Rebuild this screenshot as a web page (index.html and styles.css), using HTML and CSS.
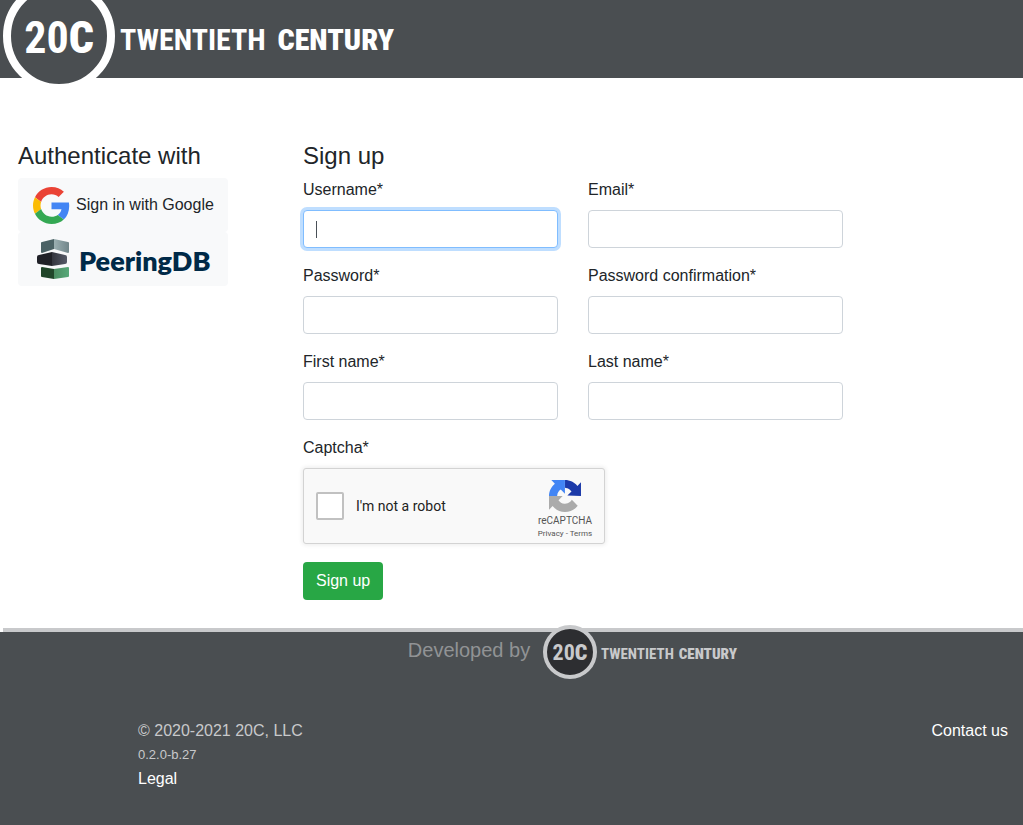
FILE: index.html
```
<!DOCTYPE html>
<html lang="en">
<head>
<meta charset="utf-8">
<title>Sign up - Twentieth Century</title>
<link rel="stylesheet" href="styles.css">
</head>
<body>
<header class="site-header">
  <a class="brand" href="#" aria-label="20C Twentieth Century">
    <svg class="brand-logo" width="400" height="92" viewBox="0 0 400 92">
      <circle cx="59" cy="36" r="52" class="brand-ring"/>
      <text x="59" y="53" class="mark" text-anchor="middle">20<tspan class="heavy">C</tspan></text>
      <text x="120" y="50" class="word">TWENTIETH</text>
      <text x="394" y="50" class="word heavy" text-anchor="end">CENTURY</text>
    </svg>
  </a>
</header>

<main class="page">
  <section class="auth">
    <h4 class="title">Authenticate with</h4>
    <button type="button" class="auth-button">
      <svg class="google-icon" width="37" height="37" viewBox="0 0 48 48" aria-hidden="true">
        <path fill="#EA4335" d="M24 9.500c3.540 0 6.710 1.220 9.210 3.600l6.850-6.850C35.900 2.380 30.470 0 24 0 14.620 0 6.510 5.380 2.560 13.220l7.980 6.190C12.430 13.720 17.740 9.500 24 9.500z"/>
        <path fill="#4285F4" d="M46.980 24.550c0-1.570-.15-3.090-.38-4.550H24v9.020h12.940c-.58 2.960-2.260 5.480-4.780 7.180l7.730 6c4.510-4.180 7.090-10.360 7.090-17.650z"/>
        <path fill="#FBBC05" d="M10.530 28.590c-.48-1.450-.76-2.990-.76-4.590s.27-3.140.76-4.590l-7.980-6.190C.92 16.460 0 20.120 0 24c0 3.880.92 7.540 2.560 10.780l7.970-6.190z"/>
        <path fill="#34A853" d="M24 48c6.480 0 11.930-2.130 15.890-5.810l-7.730-6c-2.150 1.450-4.920 2.300-8.160 2.300-6.260 0-11.570-4.220-13.470-9.910l-7.980 6.190C6.510 42.620 14.620 48 24 48z"/>
      </svg>
      <span>Sign in with Google</span>
    </button>
    <button type="button" class="auth-button peering">
      <svg width="34" height="42" viewBox="0 0 34 42" aria-hidden="true">
        <defs>
          <linearGradient id="top" x2="1"><stop stop-color="#9bafb1"/><stop offset="1" stop-color="#71868a"/></linearGradient>
          <linearGradient id="mid" x2="1"><stop stop-color="#34363e"/><stop offset="1" stop-color="#555a67"/></linearGradient>
          <linearGradient id="low" x2="1"><stop stop-color="#4a8c61"/><stop offset="1" stop-color="#56a878"/></linearGradient>
        </defs>
        <path fill="#4b6265" d="M5 5Q5 4 6 4L18 1v10L6 15Q5 15 5 14z"/>
        <path fill="url(#top)" d="M18 1l14 3q1 0 1 1v9q0 1-1 1l-14-4z"/>
        <path fill="#202127" d="M1 19q0-2 2-2l13-3v14L3 26q-2 0-2-2z"/>
        <path fill="url(#mid)" d="M16 14l13 3q2 0 2 2v5q0 2-2 2l-13 2z"/>
        <path fill="#204529" d="M5 30q0-1 1-1l12 2v10L6 39q-1 0-1-1z"/>
        <path fill="url(#low)" d="M18 31l14-2q1 0 1 1v8q0 1-1 1l-14 2z"/>
      </svg>
      <span class="peering-name">PeeringDB</span>
    </button>
  </section>

  <form class="signup">
    <h4 class="title">Sign up</h4>
    <div class="fields">
      <div class="field"><label for="username">Username*</label><input class="control focused" id="username" type="text"></div>
      <div class="field"><label for="email">Email*</label><input class="control" id="email" type="email"></div>
      <div class="field"><label for="password">Password*</label><input class="control" id="password" type="password"></div>
      <div class="field"><label for="confirm">Password confirmation*</label><input class="control" id="confirm" type="password"></div>
      <div class="field"><label for="first">First name*</label><input class="control" id="first" type="text"></div>
      <div class="field"><label for="last">Last name*</label><input class="control" id="last" type="text"></div>
    </div>
    <p class="captcha-label">Captcha*</p>
    <div class="captcha">
      <input class="robot-check" type="checkbox" id="robot">
      <label class="robot-label" for="robot">I'm not a robot</label>
      <div class="captcha-brand">
        <svg width="32" height="32" viewBox="0 0 64 64" aria-hidden="true">
          <path fill="#1c3aa9" d="M64 31.955l-.033-1.370V4.687l-7.160 7.160C50.948 4.674 42.033.093 32.050.093v15.500c.485 0 .860.057 1.135.163 4.976.393 9.288 3.140 11.828 7.124l-8.307 8.307L64 31.953"/>
          <path fill="#4285f4" d="M31.862.094l-1.370.033H4.594l7.160 7.160C4.580 13.147 0 22.060 0 32.046h16.260c0-.485.057-.860.163-1.135.393-4.976 3.140-9.288 7.124-11.828l8.307 8.307z"/>
          <path fill="#ababab" d="M.001 32.045l.033 1.370v25.898l7.160-7.160c5.860 7.173 14.774 11.754 24.760 11.754 10.400 0 19.622-4.960 25.458-12.640l-11.736-11.860a15.550 15.550 0 0 1-4.754 5.334c-2.050 1.600-4.952 2.906-8.968 2.906-.485 0-.860-.057-1.135-.163-4.976-.393-9.288-3.140-11.828-7.124l8.307-8.307z"/>
        </svg>
        <span class="captcha-name">reCAPTCHA</span>
        <span class="captcha-links"><a href="#">Privacy</a> - <a href="#">Terms</a></span>
      </div>
    </div>
    <button type="submit" class="submit">Sign up</button>
  </form>
</main>

<footer class="site-footer">
  <div class="developed">
    <span>Developed by</span>
    <svg class="footer-logo" width="196" height="56" viewBox="0 0 196 56" role="img" aria-label="20C Twentieth Century">
      <circle cx="28" cy="28" r="25" class="footer-ring"/>
      <text x="28" y="36" class="mark" text-anchor="middle">20<tspan class="heavy">C</tspan></text>
      <text x="59" y="35" class="word">TWENTIETH</text>
      <text x="195" y="35" class="word heavy" text-anchor="end">CENTURY</text>
    </svg>
  </div>
  <div class="footer-info">
    <div class="legal">
      <div>© 2020-2021 20C, LLC</div>
      <div class="version">0.2.0-b.27</div>
      <a href="#">Legal</a>
    </div>
    <a href="#">Contact us</a>
  </div>
</footer>
</body>
</html>
```
FILE: styles.css
```
* { box-sizing: border-box; }
body {
  margin: 0;
  min-height: 100vh;
  display: flex;
  flex-direction: column;
  font: 16px/24px "Liberation Sans", Arial, sans-serif;
  color: #212529;
  background: #fff;
}
button, input { font: inherit; color: inherit; }
a { color: #fff; text-decoration: none; }

.site-header { height: 78px; background: #4a4e51; }
.brand, .brand-logo { display: block; }
.brand { width: 400px; }
.brand-ring { fill: #4a4e51; stroke: #fff; stroke-width: 8px; }
.mark, .word { font-family: "Roboto Condensed", Roboto, sans-serif; font-weight: 700; }
.heavy { font-weight: 900; }
.brand-logo { fill: #fff; }
.brand-logo .mark { font-size: 44px; }
.brand-logo .word { font-size: 30px; }

.page {
  display: grid;
  grid-template-columns: calc((100% - 60px) / 3) minmax(0, 1fr);
  gap: 30px;
  padding: 63px 180px 28px 18px;
}
.title { margin: 0 0 8px; font-size: 24px; line-height: 29px; font-weight: 400; }
.auth { display: flex; flex-direction: column; align-items: flex-start; }
.auth-button {
  display: flex;
  align-items: center;
  gap: 6px;
  width: 210px;
  height: 54px;
  padding: 0 12px 0 15px;
  border: 0;
  border-radius: 4px;
  background: #f8f9fa;
  white-space: nowrap;
}
.peering { gap: 9px; padding-left: 18px; }
.peering-name { padding-top: 4px; font: 800 27px/32px Lato, sans-serif; color: #002a48; }

.fields { display: grid; grid-template-columns: 1fr 1fr; gap: 16px 30px; }
.field { display: flex; flex-direction: column; gap: 8px; }
.control {
  width: 100%;
  height: 38px;
  padding: 6px 12px;
  border: 1px solid #ced4da;
  border-radius: 4px;
  background: #fff;
}
.focused {
  border-color: #80bdff;
  box-shadow: 0 0 0 3px #bfdeff;
  background: linear-gradient(#495057, #495057) 12px center / 1px 17px no-repeat #fff;
}
.captcha-label { margin: 16px 0 8px; }
.captcha {
  display: flex;
  align-items: center;
  width: 302px;
  height: 76px;
  padding: 0 7px 0 12px;
  border: 1px solid #d3d3d3;
  border-radius: 3px;
  background: #f9f9f9;
  box-shadow: 0 0 4px 1px rgba(0, 0, 0, 0.08);
}
.robot-check {
  appearance: none;
  width: 28px;
  height: 28px;
  margin: 0 12px 0 0;
  border: 2px solid #c1c1c1;
  border-radius: 2px;
  background: #fff;
}
.robot-label { font: 14px/17px Roboto, sans-serif; color: #222; }
.captcha-brand {
  display: flex;
  flex-direction: column;
  align-items: center;
  width: 64px;
  margin-left: auto;
  padding-top: 6px;
  font-family: Roboto, sans-serif;
  color: #555;
}
.captcha-name { font-size: 10px; line-height: 14px; margin-top: 2px; }
.captcha-links { font-size: 8px; line-height: 11px; }
.captcha-links a { color: #555; }
.submit {
  display: block;
  margin-top: 18px;
  height: 38px;
  padding: 0 13px;
  border: 0;
  border-radius: 4px;
  background: #28a745;
  color: #fff;
}

.site-footer {
  flex: 1;
  background: linear-gradient(#c8c9cb, #c8c9cb) 3px 0 / 100% 4px no-repeat, linear-gradient(#fff, #fff) 0 0 / 3px 4px no-repeat, #4a4e51;
  color: #c8c9cb;
}
.developed {
  display: flex;
  justify-content: center;
  gap: 12px;
  padding-left: 123px;
  font-size: 20px;
  line-height: 44px;
  color: #919395;
}
.footer-logo { margin-top: -4px; fill: #c8c9cb; }
.footer-ring { fill: #2d2e31; stroke: #c8c9cb; stroke-width: 4px; }
.footer-logo .mark { font-size: 22px; }
.footer-logo .word { font-size: 15px; }
.footer-info {
  display: flex;
  justify-content: space-between;
  align-items: flex-start;
  padding: 39px 15px 24px 138px;
}
.version { font-size: 13px; }
```
